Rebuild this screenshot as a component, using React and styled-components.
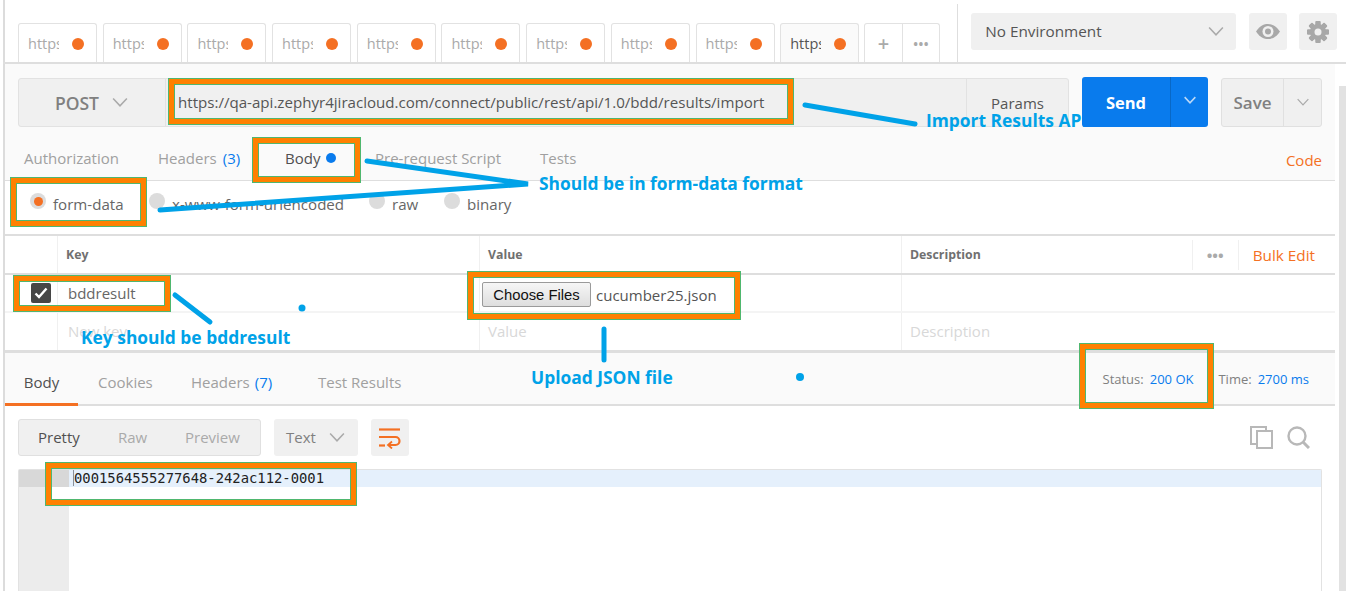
import React from "react";
import styled, { createGlobalStyle } from "styled-components";

const Global = createGlobalStyle`
  html, body { margin: 0; padding: 0; background: #fff; }
  body { font-family: "Open Sans", "Noto Sans", sans-serif; color: #666; overflow: hidden; }
  * { box-sizing: border-box; }
`;

const Page = styled.div`
  position: relative; width: 1346px; height: 591px; overflow: hidden; background: #fff;
`;
const Main = styled.div`
  margin-left: 3px; border-left: 2px solid #dcdcdc; height: 591px;
  display: flex; flex-direction: column;
`;
const ScrollTrack = styled.div`
  position: absolute; right: 0; top: 86px; bottom: 0; width: 7px; background: #e2e2e2;
`;

/* top bar */
const TopBar = styled.div`
  height: 64px; flex: none; display: flex; align-items: flex-end; padding-left: 13px;
  border-bottom: 2px solid #dedede; margin-left: -2px;
`;
const TabStrip = styled.div`display: flex; gap: 5.7px; margin-left: 2px;`;
const ReqTab = styled.div`
  width: 79px; height: 39px; border: 1px solid #e2e2e2; border-bottom: none;
  border-radius: 3px 3px 0 0; background: ${p => (p.$active ? "#fafafa" : "#fff")};
  display: flex; align-items: center; justify-content: space-between; padding: 1px 12px 0 9px;
`;
const TabUrl = styled.span`
  width: 31px; overflow: hidden; white-space: nowrap; font-size: 14.5px;
  color: ${p => (p.$active ? "#555" : "#aaa")};
`;
const OrangeDot = styled.span`
  width: 12px; height: 12px; border-radius: 50%; background: #f47023; flex: none;
`;
const TabActions = styled.div`
  margin-left: 5px; width: 76px; height: 39px; display: flex;
  border: 1px solid #e2e2e2; border-bottom: none; border-radius: 3px 3px 0 0;
`;
const TabAction = styled.div`
  flex: 1; display: flex; align-items: center; justify-content: center; color: #aaa;
  font-size: 20px; font-weight: 600;
  & + & { border-left: 1px solid #e2e2e2; font-size: 14px; letter-spacing: 0; }
`;
const VDivider = styled.div`
  width: 1px; height: 58px; background: #dedede; margin-left: 17px;
`;
const EnvGroup = styled.div`
  align-self: flex-start; margin-top: 13px; margin-left: 13px; display: flex; gap: 12.5px;
`;
const EnvSelect = styled.div`
  width: 265px; height: 37px; background: #f0f0f0; border-radius: 3px; display: flex;
  align-items: center; justify-content: space-between; padding: 0 11px 1px 14px;
  font-size: 15.3px; color: #555;
`;
const SquareBtn = styled.div`
  width: 38px; height: 37px; background: #f0f0f0; border-radius: 3px; display: flex;
  align-items: center; justify-content: center; color: #aaa;
`;

/* request */
const RequestArea = styled.div`background: #fafafa; flex: none; margin-right: 11px;`;
const RequestRow = styled.div`
  height: 77px; padding: 14px 13px 0; display: flex; align-items: flex-start;
`;
const UrlGroup = styled.div`
  width: 1051px; height: 49px; display: flex; background: #f0f0f0;
  border: 1px solid #e2e2e2; border-radius: 3px;
`;
const Method = styled.div`
  width: 147px; display: flex; align-items: center; justify-content: center; gap: 12px;
  font-size: 17.5px; font-weight: 600; color: #808080; border-right: 1px solid #e2e2e2;
`;
const UrlText = styled.div`
  flex: 1; padding: 0 12px; display: flex; align-items: center; font-size: 15.1px; color: #555;
  white-space: nowrap; padding-bottom: 1px;
`;
const Params = styled.div`
  width: 102px; display: flex; align-items: center; justify-content: center; padding-top: 1px;
  border-left: 1px solid #e2e2e2; font-size: 15px; color: #555;
`;
const SendBtn = styled.div`
  position: relative; z-index: 2; margin-left: 13px; width: 126px; height: 50px; margin-top: -1px;
  background: #097bed; border-radius: 3px; display: flex; color: #fff;
`;
const SendLabel = styled.div`
  flex: 1; display: flex; align-items: center; justify-content: center;
  font-size: 16.5px; font-weight: 700;
`;
const SendCaret = styled.div`
  width: 38px; border-left: 1px solid #0868c6; display: flex; justify-content: center;
  padding-top: 19px; color: #bcd9f7;
`;
const SaveBtn = styled.div`
  margin-left: 13px; width: 101px; height: 49px; background: #f0f0f0; border: 1px solid #e0e0e0;
  border-radius: 3px; display: flex; color: #808080;
`;
const SaveLabel = styled.div`
  flex: 1; display: flex; align-items: center; justify-content: center;
  font-size: 17px; font-weight: 600;
`;
const SaveCaret = styled.div`
  width: 38px; border-left: 1px solid #e0e0e0; display: flex; justify-content: center;
  padding-top: 19px; color: #aaa;
`;
const ReqTabs = styled.div`
  height: 40px; border-bottom: 1px solid #dedede; padding: 0 13px 0 19px;
  display: grid; grid-template-columns: 134px 127px 90px 165px 1fr auto; align-items: center;
  font-size: 15px;
`;
const TabLabel = styled.div`
  color: ${p => (p.$active ? "#505050" : "#a0a0a0")}; white-space: nowrap;
  display: flex; align-items: center; gap: 6px; padding-bottom: 6px;
`;
const Blue = styled.span`color: #097bed;`;
const CodeLink = styled.div`color: #f47023; font-size: 15px; margin-top: -2px;`;
const BlueDot = styled.span`width: 10px; height: 10px; border-radius: 50%; background: #097bed;`;

const RadioRow = styled.div`
  height: 55px; flex: none; margin-right: 11px; border-bottom: 2px solid #dedede; padding: 0 0 7px 25px;
  display: grid; grid-template-columns: 119px 220px 75px auto; justify-content: start;
  align-items: center; font-size: 15.1px; color: #666;
`;
const RadioItem = styled.div`display: flex; align-items: center; gap: 7px; white-space: nowrap;`;
const Radio = styled.span`
  width: 16px; height: 16px; border-radius: 50%; background: #dcdcdc; margin-top: -6px; flex: none;
  display: flex; align-items: center; justify-content: center;
  &::after { content: ""; width: 9px; height: 9px; border-radius: 50%; background: ${p => (p.$on ? "#f47023" : "transparent")}; }
`;

/* table */
const Row = styled.div`
  height: ${p => p.$h}px; flex: none; margin-right: 11px; display: grid;
  grid-template-columns: 52px 422px 422px 1fr;
  border-bottom: ${p => p.$b}px solid ${p => p.$bc};
`;
const Cell = styled.div`
  display: flex; align-items: center; padding-left: ${p => p.$pl || 8}px; font-size: ${p => p.$fs || 15}px;
  font-weight: ${p => p.$fw || 400}; color: ${p => p.$c || "#666"};
  border-left: ${p => (p.$first ? "none" : "1px solid #f0f0f0")}; white-space: nowrap;
  padding-bottom: ${p => p.$pb || 0}px; padding-top: ${p => p.$pt || 0}px;
`;
const DescHead = styled(Cell)`justify-content: space-between; padding-right: 20px;`;
const HeadActions = styled.div`display: flex; align-items: center; height: 100%;`;
const HeadDots = styled.div`
  width: 47px; height: 30px; border: solid #f0f0f0; border-width: 0 1px; color: #aaa;
  display: flex; align-items: center; justify-content: center; font-size: 15px; margin-right: 14px;
`;
const BulkEdit = styled.div`color: #f47023; font-size: 15.3px; font-weight: 400;`;
const CheckCell = styled.div`display: flex; align-items: center; padding-left: 26px;`;
const Check = styled.div`
  width: 20px; height: 20px; border-radius: 2px; background: #464646; color: #fff;
  display: flex; align-items: center; justify-content: center;
`;
const ChooseFiles = styled.div`
  width: 109px; height: 25px; margin-left: -6px; border: 1px solid #9a9a9a; border-radius: 2px;
  background: linear-gradient(#f6f6f6, #dedede); color: #111; font: 14.8px "Liberation Sans", sans-serif;
  display: flex; align-items: center; justify-content: center;
`;
const FileName = styled.span`margin-left: 5px; color: #555; font-size: 15px;`;

/* response */
const ResponseBar = styled.div`
  height: 56px; flex: none; margin-right: 11px; background: #fafafa;
  border-top: 3px solid #dedede; border-bottom: 2px solid #dedede; display: flex;
  justify-content: space-between; align-items: center; padding-right: 26px; margin-top: -1px;
`;
const ResTabs = styled.div`
  display: grid; grid-template-columns: 93px 93px 127px auto; height: 100%; font-size: 15px;
`;
const ResTab = styled.div`
  display: flex; align-items: center; justify-content: ${p => (p.$first ? "center" : "flex-start")};
  height: 53px; white-space: nowrap; gap: 5px; width: ${p => (p.$first ? "73px" : "auto")};
  color: ${p => (p.$active ? "#505050" : "#a0a0a0")}; padding-top: 8px;
  border-bottom: 3px solid ${p => (p.$active ? "#f47023" : "transparent")}; margin-bottom: -2px;
`;
const Stats = styled.div`display: flex; align-items: center; font-size: 13px; color: #808080;`;
const StatLabel = styled.span`margin-left: ${p => p.$ml || 0}px; margin-right: 6px;`;
const StatValue = styled.span`color: #097bed;`;

const Toolbar = styled.div`
  height: 63px; flex: none; padding: 13px 25px 0 13px; margin-right: 11px; display: flex; align-items: flex-start;
`;
const ViewGroup = styled.div`
  width: 243px; height: 37px; background: #f0f0f0; border: 1px solid #e0e0e0; border-radius: 3px;
  display: grid; grid-template-columns: 80px 67px auto; padding: 0 0 1px 19px; align-items: center; font-size: 15px;
`;
const ViewItem = styled.span`color: ${p => (p.$active ? "#505050" : "#aaa")};`;
const TextSelect = styled.div`
  margin-left: 13px; width: 84px; height: 37px; background: #f0f0f0; border-radius: 3px;
  display: flex; align-items: center; justify-content: space-between; padding: 0 12px 1px; font-size: 15px; color: #808080;
`;
const WrapBtn = styled.div`
  margin-left: 13px; width: 38px; height: 37px; background: #f0f0f0; border-radius: 3px;
  display: flex; align-items: center; justify-content: center;
`;
const RightIcons = styled.div`margin-left: auto; display: flex; gap: 14px; padding-top: 7px;`;

const Editor = styled.div`
  flex: 1; margin: 0 13px 0 13px; width: 1304px; border: 1px solid #e2e2e2; border-bottom: none;
  border-radius: 2px 2px 0 0; display: flex;
`;
const Gutter = styled.div`width: 50px; background: #ececec; flex: none;`;
const GutterActive = styled.div`height: 17px; background: #d8d8d8;`;
const Code = styled.div`flex: 1;`;
const ActiveLine = styled.div`
  height: 17px; background: #e5f0fc; padding-left: 5px; font: 13.85px/17px "DejaVu Sans Mono", monospace;
  color: #222; white-space: nowrap;
`;
const CodeText = styled.span`box-shadow: -1px 0 0 #8a9099;`;

/* annotations */
const Box = styled.div`
  position: absolute; left: ${p => p.$x}px; top: ${p => p.$y}px; width: ${p => p.$w}px; height: ${p => p.$h}px;
  border: 6px solid #ff8000; outline: 1px solid #4fb76f; outline-offset: -1px; z-index: 1;
  &::after { content: ""; position: absolute; inset: 0; border: 1px solid #4fb76f; }
`;
const Patch = styled.div`
  position: absolute; left: 51px; top: 487px; width: 18px; height: 13px; background: #fff;
`;
const Overlay = styled.svg`position: absolute; left: 0; top: 0; pointer-events: none; z-index: 1;`;
const Note = styled.div`
  position: absolute; left: ${p => p.$x}px; top: ${p => p.$y}px; z-index: 1;
  font: 700 17.4px/22px "Open Sans", sans-serif; color: #00a2e8; white-space: nowrap;
`;

const Chevron = ({ size = 18, color = "currentColor", sw = 1.6 }) => (
  <svg width={size} height={size * 0.6} viewBox="0 0 18 11" fill="none" stroke={color} strokeWidth={sw}>
    <path d="M2 1.5 L9 9 L16 1.5" />
  </svg>
);

const Eye = () => (
  <svg width="26" height="17" viewBox="0 0 26 17">
    <path d="M1 8.5C5 2.5 9 1 13 1s8 1.5 12 7.5c-4 6-8 7.5-12 7.5S5 14.500 1 8.500z" fill="#a8a8a8" />
    <circle cx="13" cy="8.500" r="5.500" fill="#f0f0f0" />
    <circle cx="13" cy="8.500" r="3" fill="#a8a8a8" />
  </svg>
);

const Gear = () => {
  const teeth = [0, 45, 90, 135, 180, 225, 270, 315];
  return (
    <svg width="24" height="24" viewBox="0 0 24 24">
      {teeth.map(a => (
        <rect key={a} x="9.500" y="1" width="5" height="22" rx="1" fill="#a8a8a8" transform={`rotate(${a} 12 12)`} />
      ))}
      <circle cx="12" cy="12" r="8" fill="#a8a8a8" />
      <circle cx="12" cy="12" r="3.500" fill="#f0f0f0" />
    </svg>
  );
};

const WrapIcon = () => (
  <svg width="24" height="22" viewBox="0 0 24 22" fill="none" stroke="#f47023" strokeWidth="2.2">
    <path d="M1 2.500H22" />
    <path d="M1 10H17.500a4 4 0 0 1 0 8H11" />
    <path d="M14 14.500L10 18l4 3.500" strokeWidth="1.800" />
    <path d="M1 18.500H7" />
  </svg>
);

const CopyIcon = () => (
  <svg width="23" height="23" viewBox="0 0 23 23" fill="#fff" stroke="#b8b8b8" strokeWidth="2">
    <rect x="1" y="1" width="15" height="17" />
    <rect x="7" y="5" width="15" height="17" />
  </svg>
);

const SearchIcon = () => (
  <svg width="23" height="23" viewBox="0 0 23 23" fill="none" stroke="#b8b8b8">
    <circle cx="10" cy="10" r="8.500" strokeWidth="2.400" />
    <path d="M16 16L22 22" strokeWidth="3" />
  </svg>
);

const CheckMark = () => (
  <svg width="14" height="12" viewBox="0 0 14 12" fill="none" stroke="#fff" strokeWidth="2.400">
    <path d="M1.500 6.500L5 10L12.500 1.500" />
  </svg>
);

const tabs = Array.from({ length: 10 }, (_, i) => i);

export default function App() {
  return (
    <Page>
      <Global />
      <Main>
        <TopBar>
          <TabStrip>
            {tabs.map(i => (
              <ReqTab key={i} $active={i === 9}>
                <TabUrl $active={i === 9}>https://qa</TabUrl>
                <OrangeDot />
              </ReqTab>
            ))}
          </TabStrip>
          <TabActions>
            <TabAction>+</TabAction>
            <TabAction>•••</TabAction>
          </TabActions>
          <VDivider />
          <EnvGroup>
            <EnvSelect>
              No Environment
              <Chevron color="#aaa" />
            </EnvSelect>
            <SquareBtn><Eye /></SquareBtn>
            <SquareBtn><Gear /></SquareBtn>
          </EnvGroup>
        </TopBar>

        <RequestArea>
          <RequestRow>
            <UrlGroup>
              <Method>POST <Chevron color="#aaa" /></Method>
              <UrlText>https://qa-api.zephyr4jiracloud.com/connect/public/rest/api/1.0/bdd/results/import</UrlText>
              <Params>Params</Params>
            </UrlGroup>
            <SendBtn>
              <SendLabel>Send</SendLabel>
              <SendCaret><Chevron size={14} sw={2} /></SendCaret>
            </SendBtn>
            <SaveBtn>
              <SaveLabel>Save</SaveLabel>
              <SaveCaret><Chevron size={14} /></SaveCaret>
            </SaveBtn>
          </RequestRow>
          <ReqTabs>
            <TabLabel>Authorization</TabLabel>
            <TabLabel>Headers <Blue>(3)</Blue></TabLabel>
            <TabLabel $active>Body <BlueDot /></TabLabel>
            <TabLabel>Pre-request Script</TabLabel>
            <TabLabel>Tests</TabLabel>
            <CodeLink>Code</CodeLink>
          </ReqTabs>
        </RequestArea>

        <RadioRow>
          <RadioItem><Radio $on />form-data</RadioItem>
          <RadioItem><Radio />x-www-form-urlencoded</RadioItem>
          <RadioItem><Radio />raw</RadioItem>
          <RadioItem><Radio />binary</RadioItem>
        </RadioRow>

        <Row $h={39} $b={2} $bc="#dedede">
          <Cell $first />
          <Cell $fs={12.300} $fw={700} $c="#707070">Key</Cell>
          <Cell $fs={12.300} $fw={700} $c="#707070">Value</Cell>
          <DescHead $fs={12.300} $fw={700} $c="#707070">
            Description
            <HeadActions>
              <HeadDots>•••</HeadDots>
              <BulkEdit>Bulk Edit</BulkEdit>
            </HeadActions>
          </DescHead>
        </Row>
        <Row $h={38} $b={2} $bc="#f4f4f4">
          <CheckCell><Check><CheckMark /></Check></CheckCell>
          <Cell $pl={10}>bddresult</Cell>
          <Cell $pt={3}>
            <ChooseFiles>Choose Files</ChooseFiles>
            <FileName>cucumber25.json</FileName>
          </Cell>
          <Cell />
        </Row>
        <Row $h={38} $b={0} $bc="#fff">
          <Cell $first />
          <Cell $c="#d8d8d8" $pb={3} $pl={10}>New key</Cell>
          <Cell $c="#d8d8d8" $pb={3}>Value</Cell>
          <Cell $c="#d8d8d8" $pb={3}>Description</Cell>
        </Row>

        <ResponseBar>
          <ResTabs>
            <ResTab $first $active>Body</ResTab>
            <ResTab>Cookies</ResTab>
            <ResTab>Headers <Blue>(7)</Blue></ResTab>
            <ResTab>Test Results</ResTab>
          </ResTabs>
          <Stats>
            <StatLabel>Status:</StatLabel><StatValue>200 OK</StatValue>
            <StatLabel $ml={25}>Time:</StatLabel><StatValue>2700 ms</StatValue>
          </Stats>
        </ResponseBar>

        <Toolbar>
          <ViewGroup>
            <ViewItem $active>Pretty</ViewItem>
            <ViewItem>Raw</ViewItem>
            <ViewItem>Preview</ViewItem>
          </ViewGroup>
          <TextSelect>Text <Chevron color="#aaa" /></TextSelect>
          <WrapBtn><WrapIcon /></WrapBtn>
          <RightIcons><CopyIcon /><SearchIcon /></RightIcons>
        </Toolbar>

        <Editor>
          <Gutter><GutterActive /></Gutter>
          <Code><ActiveLine><CodeText>0001564555277648-242ac112-0001</CodeText></ActiveLine></Code>
        </Editor>
      </Main>

      <ScrollTrack />
      <Patch />

      <Note $x={926} $y={109}>Import Results API</Note>
      <Note $x={539} $y={172}>Should be in form-data format</Note>
      <Note $x={81} $y={326}>Key should be bddresult</Note>
      <Note $x={531} $y={366}>Upload JSON file</Note>

      <Box $x={168} $y={78} $w={626} $h={47} />
      <Box $x={252} $y={137} $w={109} $h={46} />
      <Box $x={10} $y={177} $w={137} $h={50} />
      <Box $x={13} $y={275} $w={158} $h={37} />
      <Box $x={467} $y={271} $w={274} $h={49} />
      <Box $x={1079} $y={343} $w={135} $h={66} />
      <Box $x={45} $y={462} $w={312} $h={44} />

      <Overlay width="1346" height="591" viewBox="0 0 1346 591" fill="none" stroke="#00a2e8" strokeLinecap="round">
        <path d="M805 105L915 124" strokeWidth="5" />
        <path d="M367 161L528 184L160 210" strokeWidth="5" />
        <path d="M175 295L210 322" strokeWidth="5" />
        <path d="M604 329V360" strokeWidth="5" />
        <circle cx="302" cy="308" r="3.500" fill="#00a2e8" stroke="none" />
        <circle cx="800" cy="377" r="4" fill="#00a2e8" stroke="none" />
      </Overlay>
    </Page>
  );
}
